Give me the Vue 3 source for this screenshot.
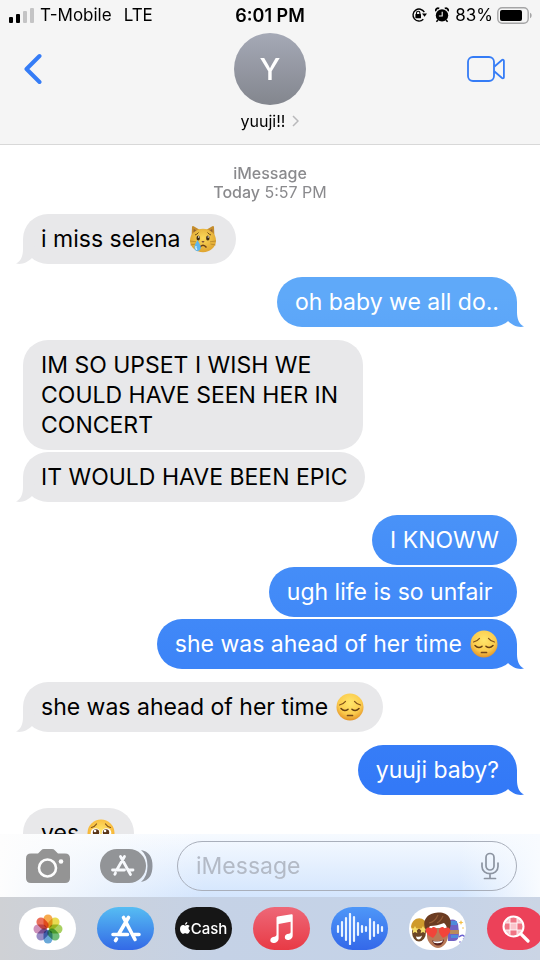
<script setup>
import { ref } from 'vue';

const draft = ref('');

const messages = ref([
    { id: 1, from: 'them', text: 'i miss selena', emoji: 'cat', last: true },
    { id: 2, from: 'me', text: 'oh baby we all do..', last: true },
    { id: 3, from: 'them', text: 'IM SO UPSET I WISH WE\nCOULD HAVE SEEN HER IN\u00a0\nCONCERT' },
    { id: 4, from: 'them', text: 'IT WOULD HAVE BEEN EPIC', last: true },
    { id: 5, from: 'me', text: 'I KNOWW' },
    { id: 6, from: 'me', text: 'ugh life is so unfair\u00a0' },
    { id: 7, from: 'me', text: 'she was ahead of her time', emoji: 'pensive', last: true },
    { id: 8, from: 'them', text: 'she was ahead of her time', emoji: 'pensive', last: true },
    { id: 9, from: 'me', text: 'yuuji baby?', last: true },
    { id: 10, from: 'them', text: 'yes', emoji: 'tears', last: true },
]);

const petals = ['#f5a13a', '#e6d83f', '#9fcb4f', '#5fb56a', '#5a9fd4', '#8d7fc0', '#c886b4', '#e8604a'];

// [x, half height] of every bar in the audio icon
const bars = [[5, 3], [9, 7], [13, 11], [17, 15], [21, 12], [25, 6], [29, 3], [33, 2], [37, 10], [41, 7], [45, 4], [49, 2]];
</script>

<template>
    <div class="phone">
        <header class="top">
            <div class="status">
                <div class="status-side">
                    <svg class="signal" width="25" height="16" viewBox="0 0 25 16">
                        <rect x="0" y="10" width="4" height="6" rx="1" fill="#000" />
                        <rect x="7" y="7" width="4" height="9" rx="1" fill="#000" />
                        <rect x="14" y="4" width="4" height="12" rx="1" fill="#c4c4c5" />
                        <rect x="21" y="1" width="4" height="15" rx="1" fill="#c4c4c5" />
                    </svg>
                    <span class="carrier">T-Mobile</span>
                    <span>LTE</span>
                </div>
                <span class="clock">6:01 PM</span>
                <div class="status-side right">
                    <svg width="16" height="16" viewBox="0 0 16 16">
                        <path d="M12.3 12.3A6 6 0 1 1 13.3 5.2" fill="none" stroke="#000" stroke-width="1.4" />
                        <path d="M11 6.6h5l-2.4 3.2z" />
                        <rect x="4.4" y="7" width="5.6" height="4.3" rx=".6" />
                        <path d="M5.5 7.4V6a1.7 1.7 0 0 1 3.4 0v1.4" fill="none" stroke="#000" stroke-width="1.1" />
                    </svg>
                    <svg class="alarm" width="14" height="16" viewBox="0 0 14 16">
                        <circle cx="7" cy="8.4" r="6.2" />
                        <path d="M.8 4.2A2.3 2.3 0 0 1 4.2 1.6M9.8 1.6a2.3 2.3 0 0 1 3.4 2.6" fill="none" stroke="#000" stroke-width="1.7" />
                        <path d="M3 13l-1.6 1.8M11 13l1.6 1.8" stroke="#000" stroke-width="1.5" />
                        <path d="M7.2 4.8V9H3.9" fill="none" stroke="#f5f5f5" stroke-width="1.1" />
                    </svg>
                    <span>83%</span>
                    <svg class="battery" width="36" height="17" viewBox="0 0 36 17">
                        <rect x=".8" y=".8" width="30.4" height="15.4" rx="4.4" fill="none" stroke="#a5a5a6" stroke-width="1.4" />
                        <rect x="3" y="3" width="22" height="11" rx="2" />
                        <path d="M33 5.8c2.2.8 2.2 4.6 0 5.4z" fill="#a5a5a6" />
                    </svg>
                </div>
            </div>
            <div class="nav">
                <button class="icon-btn back" aria-label="Back">
                    <svg width="18" height="32" viewBox="0 0 18 32">
                        <path d="M15.5 3L2.5 16l13 13" fill="none" stroke="#357cf6" stroke-width="4" stroke-linecap="round" stroke-linejoin="round" />
                    </svg>
                </button>
                <button class="contact">
                    <span class="avatar">Y</span>
                    <span class="contact-name">
                        yuuji!!
                        <svg width="7" height="12" viewBox="0 0 7 12">
                            <path d="M1 1l5 5-5 5" fill="none" stroke="#b9b9bb" stroke-width="1.5" />
                        </svg>
                    </span>
                </button>
                <button class="icon-btn video" aria-label="FaceTime">
                    <svg width="38" height="26" viewBox="0 0 38 26" fill="none" stroke="#357cf6" stroke-width="1.8">
                        <rect x="1" y="1" width="26" height="24" rx="5" />
                        <path d="M27.5 10.5L35 4c.8-.6 1.9-.2 1.9.8V21.2c0 1-1.1 1.4-1.9.8L27.5 15.5" />
                    </svg>
                </button>
            </div>
        </header>

        <main class="thread">
            <p class="stamp">
                <b>iMessage</b><br />
                <b>Today</b> 5:57 PM
            </p>
            <div
                v-for="msg in messages"
                :key="msg.id"
                class="bubble"
                :class="[msg.from, { last: msg.last }]"
            >
                <span class="text">{{ msg.text }}</span>
                <svg v-if="msg.emoji === 'cat'" class="emoji" viewBox="0 0 28 28" role="img" aria-label="crying cat">
                    <path d="M2.5 13L3 2q.3-1.4 1.7-.7L11 5zM25.5 13L25 2q-.3-1.4-1.7-.7L17 5z" fill="#c58d2d" />
                    <path d="M4.5 9l.3-5L9 6.5zM23.5 9l-.3-5L19 6.5z" fill="#8f5f35" />
                    <ellipse cx="14" cy="15.5" rx="13" ry="11.8" fill="url(#fur)" />
                    <path d="M6 10q2-.5 3.5-2.5M22 10q-2-.5-3.5-2.5" fill="none" stroke="#6d4a14" stroke-width="1" />
                    <ellipse cx="9.2" cy="13" rx="1.7" ry="2.5" fill="#3d2a15" />
                    <ellipse cx="18.8" cy="13" rx="1.7" ry="2.5" fill="#3d2a15" />
                    <circle cx="9.6" cy="12" r=".7" fill="#fff" />
                    <circle cx="19.2" cy="12" r=".7" fill="#fff" />
                    <path d="M12.3 16h3.4L14 18z" fill="#80523a" />
                    <path d="M10.5 22.5q3.5-4.5 7 0" fill="none" stroke="#6b3f16" stroke-width="1.4" />
                    <path d="M1 16l6 .8M1.5 20l5-1M27 16l-6 .8M26.5 20l-5-1" stroke="#a57523" stroke-width=".6" />
                    <path d="M8.5 15c1.5 3 3.3 5 3.3 7.6 0 4.7-6.5 4.7-6.5 0C5.3 20 7 18 8.5 15z" fill="#5eb6ef" />
                    <path d="M7 21q-.6 3 1.2 3.5" fill="none" stroke="#d8f3ff" stroke-width="1.2" />
                    <defs>
                        <radialGradient id="fur" cx=".5" cy=".4" r=".6">
                            <stop offset="0" stop-color="#fbd95a" />
                            <stop offset="1" stop-color="#dfa32f" />
                        </radialGradient>
                    </defs>
                </svg>
                <svg v-else-if="msg.emoji === 'pensive'" class="emoji" viewBox="0 0 28 28" role="img" aria-label="pensive face">
                    <circle cx="14" cy="14" r="13.5" :fill="`url(#face${msg.id})`" />
                    <path d="M3.5 12q3.5-.4 6-3.6M24.5 12q-3.5-.4-6-3.6" fill="none" stroke="#80521a" stroke-width="1.2" stroke-linecap="round" />
                    <path d="M5 15.5q3.3 3.4 7 .8M23 15.5q-3.3 3.4-7 .8" fill="none" stroke="#663e13" stroke-width="1.5" stroke-linecap="round" />
                    <path d="M11.5 22.5h5" stroke="#75481a" stroke-width="1.7" stroke-linecap="round" />
                    <defs>
                        <radialGradient :id="`face${msg.id}`" cx=".5" cy=".35" r=".65">
                            <stop offset="0" stop-color="#ffe66b" />
                            <stop offset=".65" stop-color="#fbcb4d" />
                            <stop offset="1" stop-color="#e39328" />
                        </radialGradient>
                    </defs>
                </svg>
                <svg v-else-if="msg.emoji === 'tears'" class="emoji" viewBox="0 0 28 28" role="img" aria-label="face holding back tears">
                    <circle cx="14" cy="14" r="13.5" fill="url(#tearface)" />
                    <path d="M4.5 8.5Q7.5 8 9.5 5M23.5 8.5Q20.5 8 18.5 5" fill="none" stroke="#80521a" stroke-width="1.2" stroke-linecap="round" />
                    <circle cx="8.5" cy="14" r="4.8" fill="#fff" />
                    <circle cx="19.5" cy="14" r="4.8" fill="#fff" />
                    <circle cx="9" cy="13.5" r="3.2" fill="#5a3517" />
                    <circle cx="19" cy="13.5" r="3.2" fill="#5a3517" />
                    <circle cx="8" cy="12" r="1.3" fill="#fff" />
                    <circle cx="18" cy="12" r="1.3" fill="#fff" />
                    <path d="M11 22q3-2 6 0" fill="none" stroke="#75481a" stroke-width="1.5" />
                    <defs>
                        <radialGradient id="tearface" cx=".5" cy=".4" r=".6">
                            <stop offset="0" stop-color="#ffe66b" />
                            <stop offset="1" stop-color="#f5ac2c" />
                        </radialGradient>
                    </defs>
                </svg>
            </div>
        </main>

        <footer class="bottom">
            <div class="composer">
                <button class="icon-btn" aria-label="Camera">
                    <svg width="44" height="34" viewBox="0 0 44 34">
                        <path d="M5 4.5h7L15 1.4Q16.3 0 18 0h8q1.7 0 3 1.4l3 3.1h7q5 0 5 5V29q0 5-5 5H5q-5 0-5-5V9.5q0-5 5-5z" fill="#949494" />
                        <circle cx="21.5" cy="19" r="8.5" fill="none" stroke="#fdfdfd" stroke-width="2.6" />
                        <circle cx="35" cy="12.5" r="2.3" fill="#fdfdfd" />
                    </svg>
                </button>
                <button class="icon-btn" aria-label="Apps">
                    <svg width="53" height="34" viewBox="0 0 53 34">
                        <rect width="46" height="34" rx="17" fill="#929497" />
                        <path d="M41 1q6.5 5.5 6.5 16T41 33q11.5-2 11.5-16T41 1z" fill="#8f949c" />
                        <g stroke="#f7f9fc" stroke-width="2.8" stroke-linecap="round" fill="none">
                            <path d="M24.5 7.5L17 20.5M20.5 7.5l10 18M12.5 21h12M29 21h4M15.5 24l-.7 1.3" />
                        </g>
                    </svg>
                </button>
                <div class="field">
                    <input v-model="draft" type="text" placeholder="iMessage" aria-label="iMessage" />
                    <button class="icon-btn" aria-label="Dictate">
                        <svg width="18" height="28" viewBox="0 0 18 28" fill="none" stroke="#8c94a1" stroke-width="1.7" stroke-linecap="round">
                            <rect x="5" y="1.5" width="8" height="16.5" rx="4" />
                            <path d="M1 11v3.5c0 9.5 16 9.5 16 0V11M9 22v4M3.5 26.5h11" />
                        </svg>
                    </button>
                </div>
            </div>
            <nav class="apps">
                <button class="app photos" aria-label="Photos">
                    <svg width="30" height="30" viewBox="0 0 30 30">
                        <rect
                            v-for="(color, i) in petals"
                            :key="color"
                            class="petal"
                            x="10.5"
                            y=".5"
                            width="9"
                            height="13.5"
                            rx="4.5"
                            :fill="color"
                            :transform="`rotate(${i * 45} 15 15)`"
                        />
                    </svg>
                </button>
                <button class="app store" aria-label="App Store">
                    <svg width="32" height="30" viewBox="0 0 32 30" fill="none" stroke="#fff" stroke-width="3.6" stroke-linecap="round">
                        <path d="M18.5 3.5L9 19.5M13.5 3.5L25 25.5M3 20.5h14.5M24 20.5h5M6.5 25l-1 1.5" />
                    </svg>
                </button>
                <button class="app cash">
                    <svg width="10" height="13" viewBox="0 0 10 13" fill="#fff">
                        <path d="M5 3.7C6 3.7 6.4 3 7.6 3c.8 0 1.6.4 2.1 1.1-1.8 1.1-1.5 3.6.3 4.3-.5 1.5-1.5 3.3-2.6 3.3-.9 0-1.2-.5-2.2-.5s-1.3.5-2.2.5C1.5 11.7 0 9.1 0 6.9 0 4.4 1.5 3.1 3 3.1c.9 0 1.4.6 2 .6z" />
                        <path d="M5 2.8C4.9 1.3 6 .2 7.3 0c.2 1.5-1 2.8-2.3 2.8z" />
                    </svg>
                    <span>Cash</span>
                </button>
                <button class="app music" aria-label="Music">
                    <svg width="24" height="30" viewBox="0 0 24 30" fill="#fff">
                        <path d="M6.5 3.8q0-1 1-1.2L21.5.2q1.2-.2 1.2 1V21.5c0 5-7.9 6.3-7.9 1.8 0-2.3 1.8-3.2 4-3.5q1.8-.2 1.8-1.6V7.7L8.6 9.9V24.5c0 5-8.3 6.3-8.3 1.8 0-2.3 2-3.2 4.2-3.5q2-.3 2-2z" />
                    </svg>
                </button>
                <button class="app audio" aria-label="Audio messages">
                    <svg width="54" height="32" viewBox="0 0 54 32">
                        <path
                            v-for="[x, h] in bars"
                            :key="x"
                            :d="`M${x} ${16 - h}v${h * 2}`"
                            stroke="#eaf4ff"
                            stroke-width="2.2"
                            stroke-linecap="round"
                        />
                    </svg>
                </button>
                <button class="app memoji" aria-label="Memoji">
                    <svg width="56" height="40" viewBox="0 0 56 40">
                        <!-- left face -->
                        <ellipse cx="9" cy="23" rx="7" ry="9.5" fill="#6b4526" />
                        <path d="M1 18C2 7 16 6 17 18l-1 2H2z" fill="#cf9a2c" />
                        <path d="M5 17l1.200 2.300 2.600.3-2 1.900.6 2.700L5 23l-2.400 1.200.6-2.700-2-1.900 2.600-.3zM13 17l1.200 2.300 2.600.3-2 1.900.6 2.700L13 23l-2.400 1.200.6-2.700-2-1.900 2.600-.3z" fill="#f6dc6a" />
                        <path d="M6 27.500q4 1 6-1-1 4-3.500 4-2 0-2.500-3z" fill="#fff" />
                        <!-- right face -->
                        <path d="M38 12q7-4 10 3l1 9q0 8-5 8h-6z" fill="#7061c4" />
                        <path d="M40 21h9v4h-9z" fill="#b98a5c" />
                        <path d="M40 12h7v4h-7zM41 26h7v3h-7z" fill="#4e8bdb" />
                        <path d="M51 11l.7 1.8 1.8.7-1.8.7-.7 1.8-.7-1.8-1.8-.7 1.8-.7z" fill="#f5bf45" />
                        <path d="M49 28q3-3 5-1t-1 3" fill="none" stroke="#6b62d2" stroke-width="1.5" />
                        <circle cx="53" cy="19" r=".8" fill="#f5bf45" />
                        <circle cx="50" cy="33" r=".8" fill="#6b62d2" />
                        <!-- front face -->
                        <path d="M17 19h21v8c0 6-5 12-10 12s-11-6-11-12z" fill="#b97a58" />
                        <path d="M16 21C11 11 18 4 28 3.5S44 10 39 22h-2c0-5-1-6-3-8-5 2-9 3-14 3-1 1-2 3-2 5z" fill="#6b3c22" />
                        <path d="M19 14q6-1 9-8M27 14q4-2 6-7" fill="none" stroke="#925b36" stroke-width="1.2" />
                        <path d="M21.500 20c-2.500-3-7-1-5.500 3 1 2.500 4 4.500 7 6 2.500-2.500 4.500-5.500 4-8-.7-3.500-5-4-5.500-1zM34.500 20c2.500-3 7-1 5.500 3-1 2.500-4 4.500-7 6-2.500-2.500-4.500-5.500-4-8 .7-3.500 5-4 5.500-1z" fill="#f2443a" />
                        <path d="M22 31.5q6 2 12-1-1 6-6 6-4 0-6-5z" fill="#5c241e" />
                        <path d="M23 32q5 1.5 10-.7l-1 2q-4 1.5-8 .5z" fill="#fff" />
                    </svg>
                </button>
                <button class="app images" aria-label="#images">
                    <svg width="28" height="28" viewBox="0 0 28 28">
                        <circle cx="11.5" cy="11.5" r="10" fill="#f07484" />
                        <path d="M8 8h7v7H8zM4 4h4v4H4zM15 3h4v5h-4zM3 15h5v4H3zM15 15h5v4h-5z" fill="#fac5cc" />
                        <path d="M2 8h19M2 15h19M8 2v19M15 2v19" stroke="#fff" stroke-width=".8" />
                        <circle cx="11.5" cy="11.5" r="10" fill="none" stroke="#fff" stroke-width="2" />
                        <path d="M19.5 19.5l6.5 6.5" stroke="#fff" stroke-width="3.2" stroke-linecap="round" />
                    </svg>
                </button>
            </nav>
        </footer>
    </div>
</template>

<style>
body {
    margin: 0;
    background: #fff;
}
</style>

<style scoped>
.phone {
    height: 100vh;
    display: flex;
    flex-direction: column;
    overflow: hidden;
    background: #fff;
    color: #000;
    font-family: Inter, 'Liberation Sans', sans-serif;
}

button {
    margin: 0;
    padding: 0;
    border: none;
    background: none;
    color: inherit;
    font: inherit;
    cursor: pointer;
}

svg {
    display: block;
    flex: none;
}

.icon-btn {
    display: flex;
}

/* Status bar + contact */
.top {
    background: #f5f5f5;
    border-bottom: 1px solid #d8d8d8;
}

.status {
    display: grid;
    grid-template-columns: 1fr auto 1fr;
    align-items: center;
    height: 30px;
    padding: 0 7px;
    font-size: 17px;
}

.status-side {
    display: flex;
    align-items: center;
}

.status-side.right {
    justify-content: flex-end;
}

.signal {
    margin: 0 6px 0 2px;
}

.carrier {
    margin-right: 12px;
}

.clock {
    font-size: 18px;
    font-weight: 600;
}

.alarm {
    margin: 0 6px 0 8px;
}

.battery {
    margin-left: 4px;
}

.nav {
    display: grid;
    grid-template-columns: 1fr auto 1fr;
    align-items: start;
    height: 114px;
    padding: 0 24px;
}

.back {
    margin-top: 23px;
}

.video {
    margin: 26px 11px 0 0;
    justify-self: end;
}

.contact {
    display: flex;
    flex-direction: column;
    align-items: center;
    gap: 6px;
    padding-top: 3px;
}

.avatar {
    display: flex;
    align-items: center;
    justify-content: center;
    width: 72px;
    height: 72px;
    border-radius: 50%;
    background: linear-gradient(#a5a9b6, #83868e);
    color: #fff;
    font-size: 30px;
    font-weight: 500;
}

.contact-name {
    display: flex;
    align-items: center;
    gap: 7px;
    font-size: 16px;
    line-height: 20px;
}

/* Conversation */
.thread {
    flex: 1;
    min-height: 0;
    display: flex;
    flex-direction: column;
    align-items: flex-start;
    overflow-y: auto;
    scrollbar-width: none;
    padding: 19px 23px 0;
}

.stamp {
    align-self: center;
    margin: 0 0 12px;
    color: #8a8a8d;
    font-size: 16px;
    line-height: 19px;
    text-align: center;
}

.stamp b {
    font-weight: 500;
}

.bubble {
    position: relative;
    flex: none;
    box-sizing: border-box;
    max-width: 80%;
    margin-bottom: 2px;
    padding: 10px 18px;
    border-radius: 25px;
    background: #e8e8ea;
    font-size: 23px;
    line-height: 30px;
}

.text {
    white-space: pre-line;
}

.bubble.last {
    margin-bottom: 13px;
}

.bubble.last::after {
    content: '';
    position: absolute;
    bottom: 0;
    left: -7px;
    width: 25px;
    height: 25px;
    background: #e8e8ea;
    clip-path: path('M7 0V10C7 17 5 22 0 24.5C6 26 12 23 16 19L20 0Z');
}

.bubble.me {
    align-self: flex-end;
    color: #fff;
}

/* Sent bubbles share one gradient across the window */
.bubble.me,
.bubble.me::after {
    background: linear-gradient(#5fa9f9 31%, #4790f8 56%, #3379f7 82%) fixed;
}

.bubble.me.last::after {
    left: auto;
    right: -7px;
    clip-path: path('M18 0V10C18 17 20 22 25 24.5C19 26 13 23 9 19L5 0Z');
}

.emoji {
    display: inline-block;
    width: 28px;
    height: 28px;
    margin: -2px 1px -2px 8px;
    vertical-align: -4px;
}

/* Composer */
.composer {
    display: flex;
    align-items: center;
    height: 63px;
    box-sizing: border-box;
    padding: 0 23px 0 26px;
    background:
        linear-gradient(90deg, #fdfdfd 0, rgba(253, 253, 253, 0) 38%, rgba(250, 252, 255, 0) 85%, #f8fbff 100%),
        linear-gradient(#f6faff, #d3e5fd);
}

.composer .icon-btn + .icon-btn {
    margin-left: 30px;
}

.field {
    flex: 1;
    min-width: 0;
    display: flex;
    align-items: center;
    box-sizing: border-box;
    height: 50px;
    margin-left: 24px;
    padding: 0 17px 0 18px;
    border: 1px solid #a9afbb;
    border-radius: 25px;
}

.field input {
    flex: 1;
    min-width: 0;
    padding: 0;
    border: none;
    outline: none;
    background: none;
    color: #000;
    font: inherit;
    font-size: 23px;
}

.field input::placeholder {
    color: #b3bac6;
    opacity: 1;
}

/* App strip */
.apps {
    display: flex;
    gap: 21px;
    height: 63px;
    box-sizing: border-box;
    padding: 10px 0 10px 19px;
    overflow: hidden;
    background: linear-gradient(90deg, #cfd1d5, #c5d2e6 40%, #c5d3e8 80%, #cbd5e5);
}

.app {
    flex: none;
    display: flex;
    align-items: center;
    justify-content: center;
    width: 57px;
    height: 43px;
    border-radius: 22px;
    overflow: hidden;
}

.photos,
.memoji {
    background: #fff;
}

.petal {
    mix-blend-mode: multiply;
    opacity: 0.9;
}

.store {
    background: linear-gradient(#56bdf3, #3369e6);
}

.cash {
    gap: 1px;
    background: #161616;
    color: #fff;
    font-size: 15px;
    font-weight: 500;
}

.music {
    background: linear-gradient(#ee6878, #e83a45);
}

.audio {
    background: linear-gradient(#4e97f8, #3468e9);
}

.images {
    background: #ec4159;
}
</style>
